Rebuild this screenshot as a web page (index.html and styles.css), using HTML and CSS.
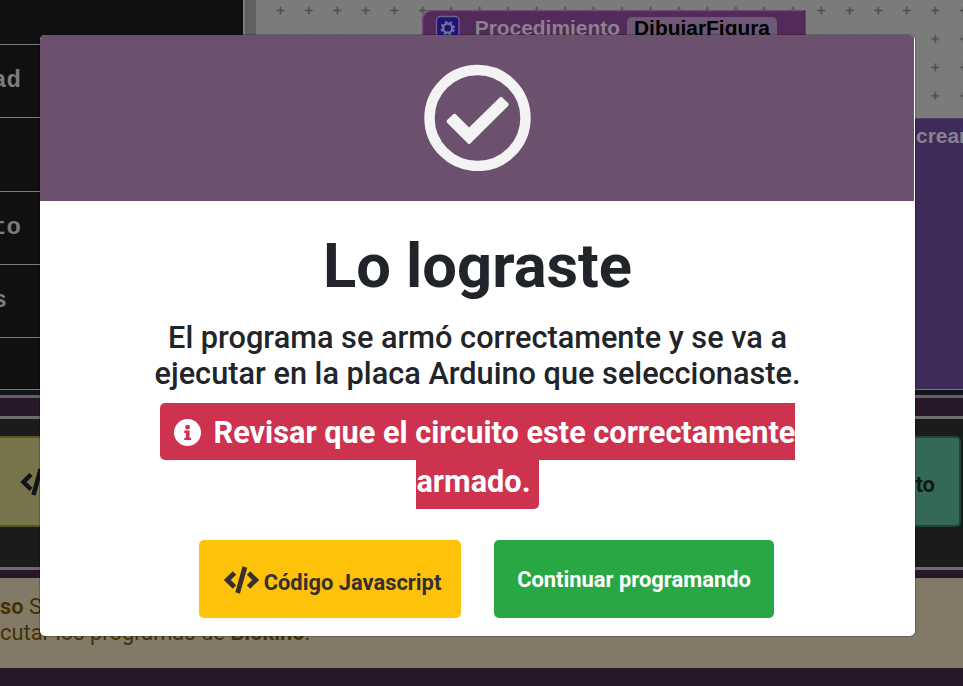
FILE: index.html
```html
<!DOCTYPE html>
<html lang="es">
<head>
<meta charset="utf-8">
<title>Blokino</title>
<link rel="stylesheet" href="styles.css">
</head>
<body>
<div class="page">
  <div class="editor">
    <ul class="toolbox">
      <li></li>
      <li>ad</li>
      <li></li>
      <li>to</li>
      <li class="short">s</li>
      <li></li>
    </ul>
    <div class="scrollbar"></div>
    <svg class="workspace" width="707" height="389" viewBox="256 0 707 389">
      <defs>
        <pattern id="grid" x="266.2" y="-3.7" width="28.47" height="28.45" patternUnits="userSpaceOnUse">
          <path d="M10.200 14.200h8M14.200 10.200v8" stroke="#4c4c4c" stroke-width="1.600"/>
        </pattern>
      </defs>
      <rect x="256" width="707" height="389" fill="#7b7b7b"/>
      <rect x="256" width="707" height="389" fill="url(#grid)"/>
      <path d="M422.500 60V20a9.500 9.500 0 0 1 9.500-9.500H805V60z" fill="#532b5a" stroke="#432249"/>
      <path d="M422.700 60V20a9.500 9.500 0 0 1 9.500-9.300H804" fill="none" stroke="#6f4a75" stroke-width="1.300"/>
      <rect x="436.500" y="16.500" width="22.500" height="24" rx="4" fill="#20147a" stroke="#6c6689" stroke-width="1.300"/>
      <circle cx="447.700" cy="28.200" r="4.500" fill="none" stroke="#77739a" stroke-width="2.300"/>
      <circle cx="447.700" cy="28.200" r="6.200" fill="none" stroke="#77739a" stroke-width="2" stroke-dasharray="2.435 2.435" stroke-dashoffset="-1.217"/>
      <text class="block-text" x="474.700" y="35.300">Procedimiento</text>
      <rect x="627" y="17" width="150" height="28" rx="5" fill="#6e5875"/>
      <text class="block-text field" x="634" y="35.300">DibujarFigura</text>
      <rect x="800" y="118.500" width="180" height="280" fill="#3e2b5a" stroke="#50416b"/>
      <text class="block-text" x="916" y="143">crear</text>
    </svg>
  </div>
  <div class="edge"></div>
  <div class="actions">
    <div class="action action-code">
      <svg width="36" height="28" viewBox="0 0 36 28" fill="none" stroke="#101418" stroke-width="4.500"><path d="M11 6.500 3.500 14l7.500 7.500M20.500 1l-7 26M25 6.500l7.500 7.500-7.500 7.500"/></svg>
    </div>
    <div class="action action-project">to</div>
  </div>
  <div class="notice">
    <p><b>so</b> S</p>
    <p>cutar los programas de <b>Blokino</b>.</p>
  </div>
</div>
<div class="modal">
  <div class="modal-header">
    <svg width="107" height="107" viewBox="0 0 107 107">
      <circle cx="53.500" cy="54" r="48" fill="none" stroke="#f3f3f3" stroke-width="10.400"/>
      <path transform="translate(.3 .8)" d="M22.800 55.300 29 49.400Q30.300 48.500 31.500 49.400L44.800 62.800 75.400 32.600Q76.700 31.400 78 32.600L84 38.500Q85 39.800 84 41L46 78.800Q44.800 79.800 43.600 78.800L22.800 58Q21.600 56.700 22.800 55.300z" fill="#f3f3f3"/>
    </svg>
  </div>
  <div class="modal-body">
    <h1>Lo lograste</h1>
    <p class="lead">El programa se armó correctamente y se va a<br>ejecutar en la placa Arduino que seleccionaste.</p>
    <p class="warn"><span class="warn-label"><svg class="info" width="27" height="27" viewBox="0 0 27 27"><circle cx="13.500" cy="13.500" r="13.500" fill="#fff"/><circle cx="13.600" cy="8.200" r="2.400" fill="#cd334f"/><path d="M10.300 11.600h5.200v7.200h1.600v2.300h-6.800v-2.300h1.600v-4.900h-1.600z" fill="#cd334f"/></svg>Revisar que el circuito este correctamente<br>armado.</span></p>
    <div class="buttons">
      <button class="btn btn-code"><svg width="35" height="28" viewBox="0 0 35 28" fill="none" stroke="#343030" stroke-width="4.800"><path d="M10.500 7 3.300 14l7.200 7M20.900 1l-7.300 26M24.500 7l7.200 7-7.200 7"/></svg><span>Código Javascript</span></button>
      <button class="btn btn-go">Continuar programando</button>
    </div>
  </div>
</div>
</body>
</html>
```

FILE: styles.css
```css
* { box-sizing: border-box; }
body {
  margin: 0;
  width: 963px;
  height: 686px;
  overflow: hidden;
  background: #271728;
  font-family: Roboto, "Liberation Sans", sans-serif;
}
p, h1, ul { margin: 0; padding: 0; }
.page { display: flex; flex-direction: column; height: 686px; }

.editor {
  display: flex;
  height: 390px;
  border-bottom: 1px solid #777;
}
.toolbox {
  width: 243px;
  flex: none;
  list-style: none;
  background: #101010;
  overflow: hidden;
}
.toolbox li {
  height: 73.250px;
  padding-top: 21px;
  border-bottom: 1px solid #7b7b7b;
  color: #7b7b7b;
  font: bold 24px/30px "Liberation Mono", monospace;
  width: 243px;
  padding-right: 222px;
  display: flex;
  justify-content: flex-end;
}
.toolbox li:first-child { height: 45px; }
.toolbox li:last-child { border: 0; }
.toolbox .short { padding-right: 236px; }
.scrollbar {
  width: 13px;
  flex: none;
  background: #606060;
  border-left: 2px solid #7b7b7b;
}
.workspace { display: block; flex: none; }
.block-text {
  font: bold 20.930px "Liberation Sans", sans-serif;
  fill: #8b818e;
}
.block-text.field { fill: #000; }

.edge {
  height: 8px;
  background: #12151c;
  border-bottom: 3px solid #656163;
}
.actions {
  display: flex;
  justify-content: space-between;
  height: 154px;
  margin-top: 18px;
  padding: 17px 2px 0 0;
  background: #1b1b1b;
  border-top: 3px solid #6d6d6d;
  border-bottom: 3px solid #6d6d6d;
}
.action {
  display: flex;
  align-items: center;
  height: 91px;
  border: 2px solid #5b5520;
}
.action-code {
  width: 200px;
  padding-left: 20px;
  background: #77734a;
  border-left: 0;
}
.action-project {
  width: 220px;
  justify-content: flex-end;
  padding: 6px 24px 0 0;
  background: #336955;
  border-color: #204536;
  border-radius: 5px;
  color: #111614;
  font-size: 22px;
  font-weight: 700;
}
.notice {
  height: 90px;
  margin-top: 8px;
  padding-top: 16px;
  background: #827a66;
  color: #433304;
  font-size: 21.900px;
  line-height: 26px;
  white-space: nowrap;
}

.modal {
  position: absolute;
  left: 39px;
  top: 34px;
  width: 877px;
  height: 603px;
  background: #fff;
  background-clip: padding-box;
  border: 1px solid rgba(0, 0, 0, .2);
  border-radius: 6px;
  overflow: hidden;
}
.modal-header {
  width: 874px;
  height: 166px;
  padding-top: 29px;
  background: #6c516f;
  border-radius: 4px 4px 0 0;
  text-align: center;
}
.modal-body {
  width: 875px;
  padding-top: 28px;
  color: #212529;
  text-align: center;
}
h1 { font-size: 61.440px; line-height: 75px; font-weight: 700; }
.lead {
  margin-top: 16px;
  font-size: 30.700px;
  line-height: 36px;
  font-weight: 500;
}
.warn {
  margin-top: 16px;
  font-size: 30.680px;
  line-height: 49px;
  font-weight: 700;
  white-space: nowrap;
}
.warn-label {
  padding: 12px 8px 10px 14px;
  background: #cd334f;
  border-radius: 5px;
  color: #fff;
}
.info { margin-right: 13px; vertical-align: -3px; }
.buttons {
  display: flex;
  gap: 33px;
  margin: 34px 0 0 159px;
}
.btn {
  display: flex;
  align-items: center;
  justify-content: center;
  height: 78px;
  padding: 2px 0 0;
  border: 0;
  border-radius: 5px;
  font: 700 21.900px/26px Roboto, sans-serif;
}
.btn-code {
  width: 262px;
  gap: 5px;
  padding-left: 5px;
  background: #ffc20a;
  color: #343030;
}
.btn-code span { padding-top: 6px; }
.btn-go { width: 280px; background: #28a745; color: #fff; }
```
